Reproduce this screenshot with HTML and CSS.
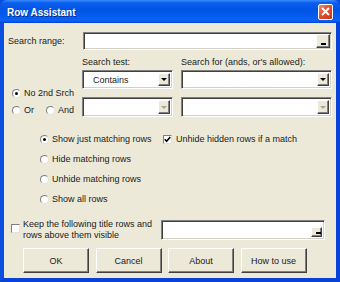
FILE: index.html
```html
<!DOCTYPE html>
<html>
<head>
<meta charset="utf-8">
<link rel="stylesheet" href="styles.css">
</head>
<body>
<div class="window">
  <div class="titlebar">
    <span class="title">Row Assistant</span>
    <span class="close"><svg width="9" height="9" viewBox="0 0 9 9"><path d="M1 1L8 8M8 1L1 8" stroke="#fff" stroke-width="2"/></svg></span>
  </div>
  <div class="body">
    <div class="range-row">
      <span class="range-label">Search range:</span>
      <div class="sunken range-field"><span class="ref-btn raised"></span></div>
    </div>
    <div class="search-grid">
      <div class="lbl g-c1">Search test:</div>
      <div class="lbl g-c2">Search for (ands, or's allowed):</div>
      <div class="left-radios">
        <div class="opt"><span class="radio on"></span><span>No 2nd Srch</span></div>
        <div class="opt"><span class="radio"></span><span class="or-text">Or</span><span class="radio"></span><span>And</span></div>
      </div>
      <div class="combo sunken g-c1 g-r1"><span class="combo-text">Contains</span><span class="arrow raised"><i class="tri"></i></span></div>
      <div class="combo sunken g-c2 g-r1"><span class="combo-text"></span><span class="arrow raised"><i class="tri"></i></span></div>
      <div class="combo sunken g-c1 g-r2"><span class="combo-text"></span><span class="arrow raised"><i class="tri dis"></i></span></div>
      <div class="combo sunken g-c2 g-r2"><span class="combo-text"></span><span class="arrow raised"><i class="tri dis"></i></span></div>
    </div>
    <div class="options">
      <div class="opt-row">
        <div class="opt opt-main"><span class="radio on"></span><span>Show just matching rows</span></div>
        <div class="opt"><span class="check on"><svg width="7" height="7" viewBox="0 0 7 7"><path d="M0.8 3.2L2.6 5.2L6.3 1" fill="none" stroke="#000" stroke-width="1.6"/></svg></span><span>Unhide hidden rows if a match</span></div>
      </div>
      <div class="opt-row"><div class="opt"><span class="radio"></span><span>Hide matching rows</span></div></div>
      <div class="opt-row"><div class="opt"><span class="radio"></span><span>Unhide matching rows</span></div></div>
      <div class="opt-row"><div class="opt"><span class="radio"></span><span>Show all rows</span></div></div>
    </div>
    <div class="keep-row">
      <span class="check keep-check"></span>
      <span class="keep-text">Keep the following title rows and rows above them visible</span>
      <div class="sunken keep-field"><span class="ref-btn raised"></span></div>
    </div>
    <div class="buttons">
      <button class="btn raised">OK</button>
      <button class="btn raised">Cancel</button>
      <button class="btn raised">About</button>
      <button class="btn raised">How to use</button>
    </div>
  </div>
</div>
</body>
</html>
```
FILE: styles.css
```css
html, body {
  margin: 0;
  padding: 0;
}
body {
  font-family: "Liberation Sans", Arial, sans-serif;
  font-size: 9px;
  color: #1a1a1a;
}
.window {
  width: 340px;
  height: 282px;
  display: flex;
  flex-direction: column;
  background: #0b4fe0;
}
.titlebar {
  height: 23px;
  flex: none;
  display: flex;
  align-items: center;
  padding: 0 7px 0 7px;
  border-radius: 7px 7px 0 0;
  background: linear-gradient(to bottom, #3d8cff 0%, #0b5fee 12%, #0054e3 45%, #0861f5 85%, #0a5ef0 92%, #003dd7 100%);
}
.title {
  color: #fff;
  font-weight: bold;
  font-size: 10px;
  text-shadow: 1px 1px 0 #0a2a8a;
  padding-top: 1px;
}
.close {
  margin-left: auto;
  width: 15px;
  height: 16px;
  box-sizing: border-box;
  border: 1px solid #fff;
  border-radius: 2px;
  background: linear-gradient(135deg, #f08a6a 0%, #e0512b 45%, #c2381a 100%);
  display: flex;
  align-items: center;
  justify-content: center;
}
.body {
  flex: 1;
  background: #ece9d8;
  border: 4px solid #0842d8;
  border-top: 0;
  border-color: #0b4fe0 #0842d8 #0842d8 #0b4fe0;
  display: flex;
  flex-direction: column;
}
.sunken {
  box-sizing: border-box;
  background: #fff;
  border: 1px solid;
  border-color: #808080 #fff #fff #808080;
  box-shadow: inset 1px 1px 0 #404040, inset -1px -1px 0 #d4d0c8;
}
.raised {
  box-sizing: border-box;
  background: #ece9d8;
  border: 1px solid;
  border-color: #fff #404040 #404040 #fff;
  box-shadow: inset -1px -1px 0 #808080;
}
.range-row {
  display: flex;
  align-items: center;
  margin-top: 9px;
  height: 18px;
}
.range-label {
  width: 75px;
  padding-left: 4px;
}
.range-field {
  width: 249px;
  height: 18px;
  display: flex;
  justify-content: flex-end;
  padding: 1px;
}
.ref-btn {
  width: 14px;
  position: relative;
}
.ref-btn::after {
  content: "";
  position: absolute;
  left: 4px;
  bottom: 2px;
  width: 5px;
  height: 2px;
  background: #000;
}
.search-grid {
  display: grid;
  grid-template-columns: 78px 91px 8px 151px;
  grid-template-rows: 12px 2px 19px 8px 20px;
  margin-top: 6px;
}
.lbl {
  line-height: 12px;
  grid-row: 1;
}
.g-c1 { grid-column: 2; }
.g-c2 { grid-column: 4; }
.g-r1 { grid-row: 3; }
.g-r2 { grid-row: 5; }
.left-radios {
  grid-column: 1;
  grid-row: 3 / 6;
  display: flex;
  flex-direction: column;
  gap: 5px;
  padding: 17px 0 0 8px;
}
.opt {
  display: flex;
  align-items: center;
  height: 12px;
  white-space: nowrap;
}
.radio {
  width: 9px;
  height: 9px;
  box-sizing: border-box;
  border-radius: 50%;
  background: #fff;
  border: 1px solid;
  border-color: #808080 #e4e2d8 #e4e2d8 #808080;
  margin-right: 3px;
  display: inline-flex;
  align-items: center;
  justify-content: center;
  flex: none;
}
.radio.on::after {
  content: "";
  width: 3px;
  height: 3px;
  border-radius: 50%;
  background: #000;
}
.or-text {
  width: 22px;
}
.combo {
  display: flex;
  padding: 2px 2px 2px 2px;
}
.combo-text {
  flex: 1;
  padding-left: 8px;
  line-height: 14px;
}
.arrow {
  width: 12px;
  display: flex;
  align-items: center;
  justify-content: center;
}
.tri {
  width: 0;
  height: 0;
  border-left: 3px solid transparent;
  border-right: 3px solid transparent;
  border-top: 3px solid #000;
}
.tri.dis {
  border-top-color: #aca899;
}
.options {
  margin-top: 12px;
  padding-left: 36px;
}
.opt-row {
  height: 20px;
  display: flex;
  align-items: center;
}
.opt-main {
  width: 123px;
}
.check {
  width: 9px;
  height: 9px;
  box-sizing: border-box;
  background: #fff;
  border: 1px solid;
  border-color: #808080 #e4e2d8 #e4e2d8 #808080;
  margin-right: 4px;
  display: inline-flex;
  align-items: center;
  justify-content: center;
  flex: none;
}
.keep-row {
  display: flex;
  align-items: flex-start;
  margin-top: 10px;
  padding-left: 7px;
}
.keep-check {
  margin-top: 5px;
  margin-right: 3px;
}
.keep-text {
  width: 138px;
  line-height: 11px;
}
.keep-field {
  width: 164px;
  height: 20px;
  margin-top: 1px;
  display: flex;
  justify-content: flex-end;
  padding: 6px 2px 2px 2px;
}
.keep-field .ref-btn {
  width: 11px;
}
.buttons {
  display: flex;
  gap: 6.5px;
  margin-top: 7px;
  padding-left: 19px;
}
.btn {
  width: 66px;
  height: 25px;
  font-family: "Liberation Sans", Arial, sans-serif;
  font-size: 9px;
  color: #1a1a1a;
  padding: 0;
}
```
